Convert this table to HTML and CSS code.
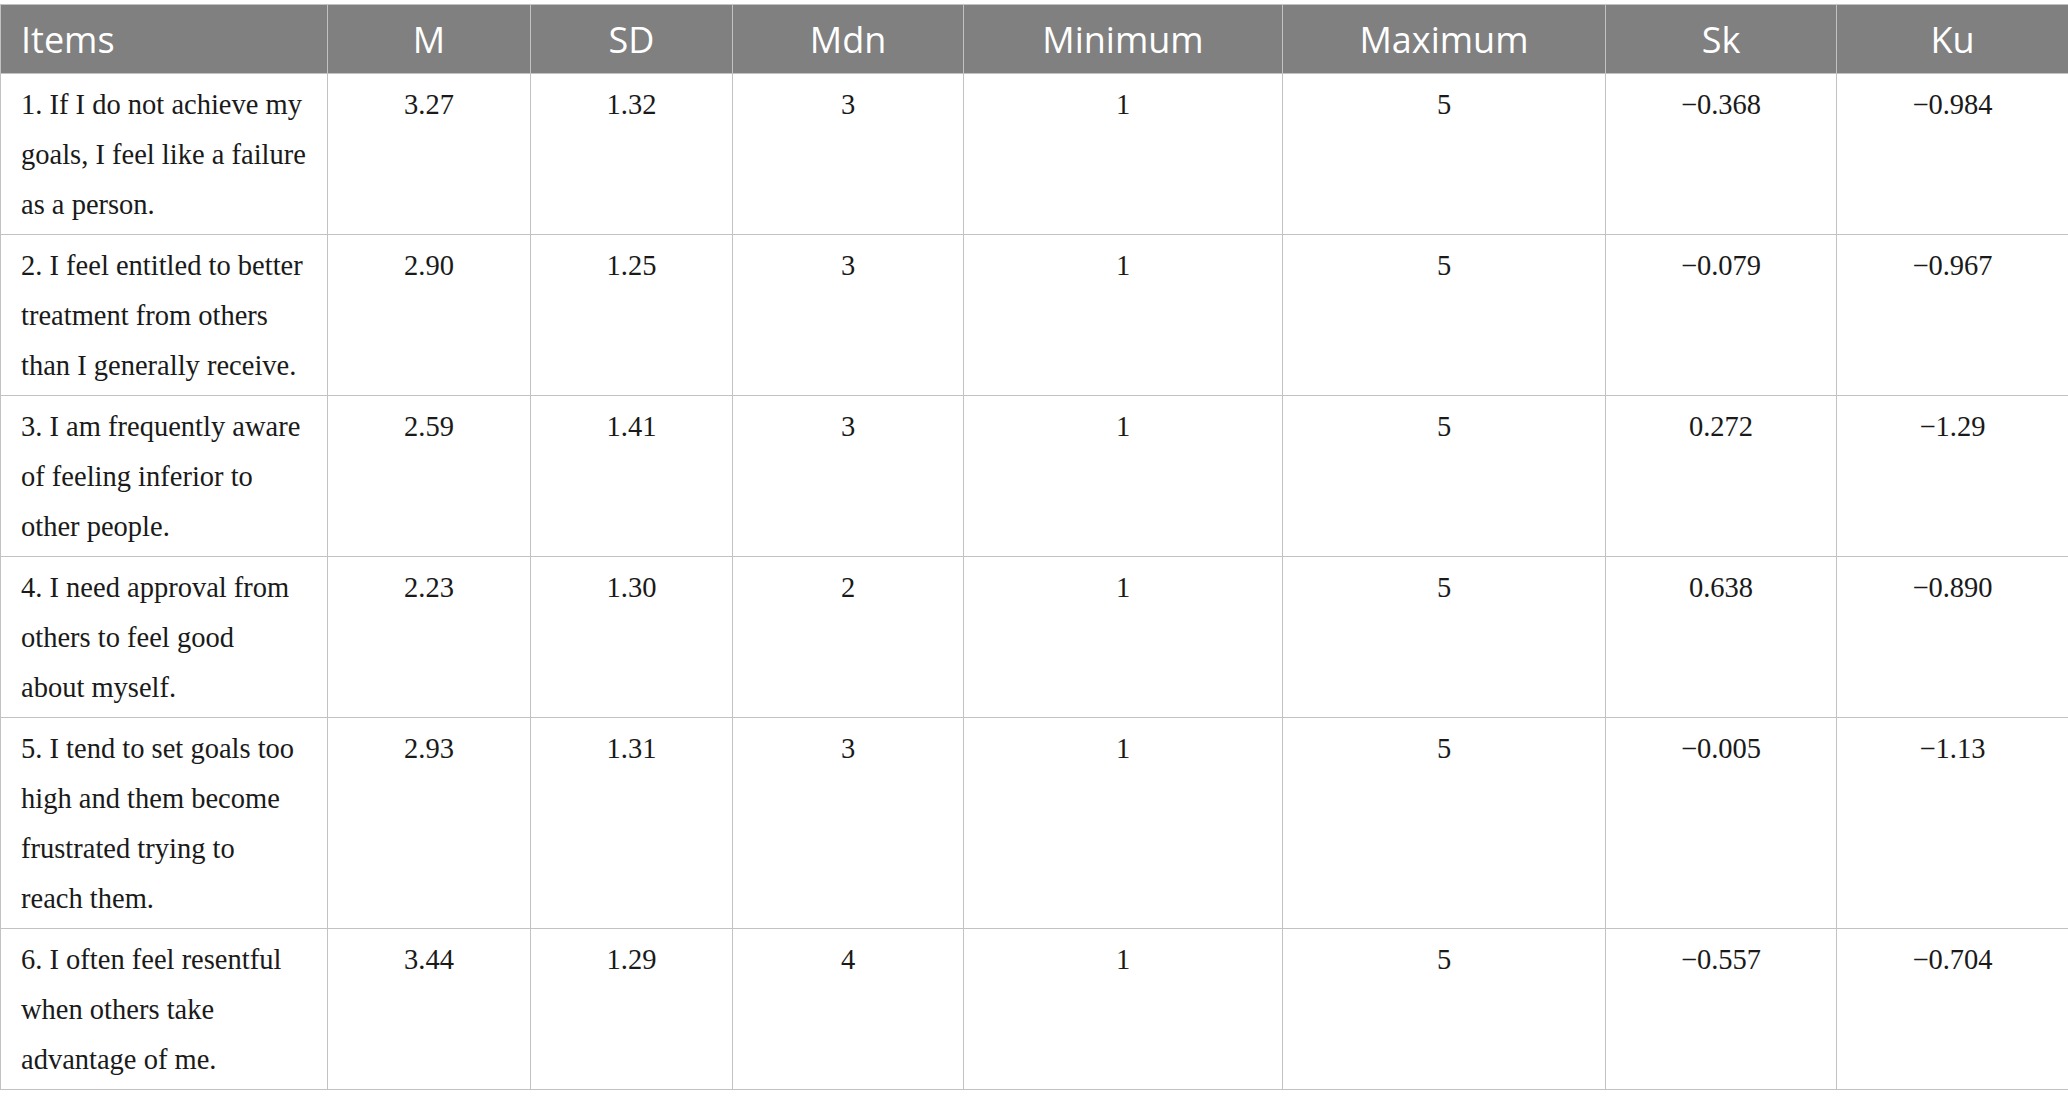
FILE: index.html
```html
<!DOCTYPE html>
<html lang="en">
<head>
<meta charset="utf-8">
<title>Items</title>
<link rel="stylesheet" href="styles.css">
</head>
<body>
<table class="stats">
  <colgroup>
    <col class="c-items">
    <col class="c-m">
    <col class="c-sd">
    <col class="c-mdn">
    <col class="c-min">
    <col class="c-max">
    <col class="c-sk">
    <col class="c-ku">
  </colgroup>
  <thead>
    <tr>
      <th class="left">Items</th>
      <th>M</th>
      <th>SD</th>
      <th>Mdn</th>
      <th>Minimum</th>
      <th>Maximum</th>
      <th>Sk</th>
      <th>Ku</th>
    </tr>
  </thead>
  <tbody>
    <tr>
      <td class="left">1. If I do not achieve my<br>goals, I feel like a failure<br>as a person.</td>
      <td>3.27</td><td>1.32</td><td>3</td><td>1</td><td>5</td><td>−0.368</td><td>−0.984</td>
    </tr>
    <tr>
      <td class="left">2. I feel entitled to better<br>treatment from others<br>than I generally receive.</td>
      <td>2.90</td><td>1.25</td><td>3</td><td>1</td><td>5</td><td>−0.079</td><td>−0.967</td>
    </tr>
    <tr>
      <td class="left">3. I am frequently aware<br>of feeling inferior to<br>other people.</td>
      <td>2.59</td><td>1.41</td><td>3</td><td>1</td><td>5</td><td>0.272</td><td>−1.29</td>
    </tr>
    <tr>
      <td class="left">4. I need approval from<br>others to feel good<br>about myself.</td>
      <td>2.23</td><td>1.30</td><td>2</td><td>1</td><td>5</td><td>0.638</td><td>−0.890</td>
    </tr>
    <tr>
      <td class="left">5. I tend to set goals too<br>high and them become<br>frustrated trying to<br>reach them.</td>
      <td>2.93</td><td>1.31</td><td>3</td><td>1</td><td>5</td><td>−0.005</td><td>−1.13</td>
    </tr>
    <tr>
      <td class="left">6. I often feel resentful<br>when others take<br>advantage of me.</td>
      <td>3.44</td><td>1.29</td><td>4</td><td>1</td><td>5</td><td>−0.557</td><td>−0.704</td>
    </tr>
  </tbody>
</table>
</body>
</html>
```

FILE: styles.css
```css
html, body {
  margin: 0;
  padding: 0;
  background: #ffffff;
}

body {
  padding-top: 4px;
}

.stats {
  border-collapse: collapse;
  table-layout: fixed;
  width: 2068px;
}

.c-items { width: 327px; }
.c-m { width: 203px; }
.c-sd { width: 202px; }
.c-mdn { width: 231px; }
.c-min { width: 319px; }
.c-max { width: 323px; }
.c-sk { width: 231px; }
.c-ku { width: 232px; }

.stats th,
.stats td {
  border: 1px solid #c2c2c2;
}

.stats th {
  background: #808080;
  color: #ffffff;
  font-family: "Open Sans", "Noto Sans", sans-serif;
  font-weight: 400;
  font-size: 36px;
  height: 68px;
  padding: 0 20px;
  text-align: center;
  vertical-align: middle;
}

.stats td {
  font-family: "Liberation Serif", "Times New Roman", serif;
  font-size: 28.5px;
  line-height: 50px;
  color: #1a1a1a;
  padding: 6px 20px 4px;
  text-align: center;
  vertical-align: top;
  white-space: nowrap;
}

.stats .left {
  text-align: left;
}
```
